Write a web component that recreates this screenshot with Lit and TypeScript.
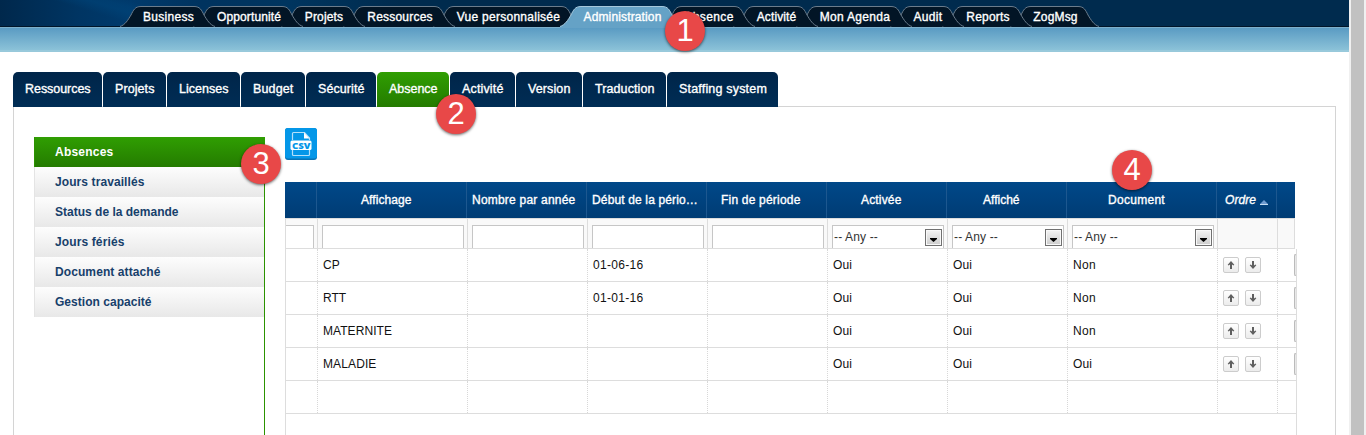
import { LitElement, html, css } from "lit";
import { customElement, property } from "lit/decorators.js";
import { classMap } from "lit/directives/class-map.js";
import { styleMap } from "lit/directives/style-map.js";

/** Label whose tracking is adjusted so that it takes a set width. */
@customElement("fit-text")
class FitText extends LitElement {
  @property() text = "";
  @property({ type: Number }) w = 0;

  static styles = css`
    :host { display: inline-block; white-space: pre; }
    .label { display: inline-block; font-variant-ligatures: none; }
  `;

  updated() {
    const el = this.renderRoot.querySelector(".label") as HTMLElement;
    el.style.letterSpacing = "0px";
    const natural = el.getBoundingClientRect().width;
    if (this.w) el.style.letterSpacing = (this.w - natural) / this.text.length + "px";
  }

  render() {
    return html`<span class="label">${this.text}</span>`;
  }
}

type Item = [label: string, box: number, text: number];

const NAV: Item[] = [
  ["Business", 73, 51], ["Opportunité", 88, 64], ["Projets", 62, 38.5], ["Ressources", 90, 65.5],
  ["Vue personnalisée", 127, 103.5], ["Administration", 101, 78], ["Absence", 72, 49.5],
  ["Activité", 63, 39.5], ["Mon Agenda", 94, 70.5], ["Audit", 52, 29], ["Reports", 68, 43.5], ["ZogMsg", 67, 44.5],
];
const TABS: Item[] = [
  ["Ressources", 89, 65.5], ["Projets", 63, 39.5], ["Licenses", 73, 49.5], ["Budget", 64, 40.5], ["Sécurité", 70, 46.5],
  ["Absence", 72, 48.5], ["Activité", 65, 41.5], ["Version", 66, 42.5], ["Traduction", 83, 59.5], ["Staffing system", 111, 88],
];
const SIDE: [string, number][] = [
  ["Absences", 58.5], ["Jours travaillés", 89.5], ["Status de la demande", 123.5],
  ["Jours fériés", 69.5], ["Document attaché", 105.5], ["Gestion capacité", 96.5],
];
const HEADS: [string, number, number][] = [
  ["", 0, 0], ["Affichage", 50.5, 44], ["Nombre par année", 103.5, 5], ["Début de la pério…", 106, 5],
  ["Fin de période", 79.5, 14], ["Activée", 40.5, 34], ["Affiché", 36.5, 36], ["Document", 57, 41], ["Ordre", 31, 8], ["", 0, 0],
];
const FILTERS = ["text", "text", "text", "text", "text", "select", "select", "select", "", ""];
const ROWS = [
  ["", "CP", "", "01-06-16", "", "Oui", "Oui", "Non"],
  ["", "RTT", "", "01-01-16", "", "Oui", "Oui", "Non"],
  ["", "MATERNITE", "", "", "", "Oui", "Oui", "Non"],
  ["", "MALADIE", "", "", "", "Oui", "Oui", "Oui"],
  ["", "", "", "", "", "", "", ""],
];
const TEXT_W: Record<string, number> = { CP: 17, RTT: 23, MATERNITE: 69, MALADIE: 53.5, "01-06-16": 50.5, "01-01-16": 50.5, Oui: 19, Non: 23 };

const arrow = (down: boolean) => html`<span class="move"><svg width="8" height="8" viewBox="0 0 8 8">
  <path transform=${down ? "rotate(180 4 4)" : ""} d="M4 0 7.300 3.700 6.400 4.400 5 3.400V8H3V3.400L1.600 4.400 .7 3.700Z" fill="#5f5f5f"/></svg></span>`;

@customElement("app-root")
class AppRoot extends LitElement {
  static styles = css`
    :host { display: flex; position: relative; height: 435px; overflow: hidden; background: #fff;
      font-family: "Liberation Sans", Arial, sans-serif; font-size: 12px; color: #111; }
    .page { width: 1349px; flex: none; display: flex; flex-direction: column; }
    .scroll { flex: 1; background: #f0f0f0; padding: 0 2px; }
    .thumb { height: 100%; background: #c1c1c1; }
    .top { height: 26px; flex: none; display: flex; padding-left: 131px; border-bottom: 1px solid #001529;
      background: linear-gradient(197deg, transparent 36%, #00498055 44%, #00457a88 50%, transparent 62%) 30px 0 / 200px 26px no-repeat,
        linear-gradient(90deg, #00284c, #003563 80px, #003a6c 130px, #00335f 200px, #00355f 290px, #002b4e 400px); }
    .nav { position: relative; height: 27px; margin-bottom: -1px; flex: none; display: flex; justify-content: center; padding: 10px 0 0 2px;
      box-sizing: border-box; color: #fff; font-size: 12px; line-height: 15px; }
    .shape { position: absolute; left: -11px; top: 6px; }
    .nav fit-text, .tab fit-text, .head fit-text { -webkit-text-stroke: .35px currentColor; }
    .nav fit-text { position: relative; }
    .band { height: 25px; flex: none; box-sizing: border-box; border-top: 1px solid #7db0cb; border-bottom: 2px solid #98c9db;
      background: linear-gradient(#5a9bc3, #8bc2d8); }
    .tabs { display: flex; gap: 1px; padding: 20px 0 0 13px; flex: none; }
    .tab { position: relative; height: 35px; box-sizing: border-box; padding: 9px 0 0 12px; border-radius: 5px 5px 0 0; color: #fff; font-size: 12.5px; line-height: 16px;
      background: linear-gradient(#002549, #002d55); }
    .tab.on { background: linear-gradient(#309e02, #247b00); }
    .panel { display: flex; flex: 1; box-sizing: border-box; width: 1323px; margin: -1px 0 0 13px; border: 1px solid #d4d4d4; border-bottom: 0; }
    .side { width: 231px; flex: none; box-sizing: border-box; margin: 30px 0 0 20px; border-right: 1px solid #2c9300; }
    .entry { height: 30px; box-sizing: border-box; padding: 1px 0 0 20px; border-left: 1px solid #e4e4e4; font-weight: bold; color: #17406b; line-height: 29px;
      background: linear-gradient(#fdfdfd, #e8e8e8); }
    .entry.on { color: #fff; border-color: #2c9300; background: linear-gradient(#309e02, #247b00); margin-right: -1px; }
    .main { margin: 21px 0 0 20px; width: 1012px; display: flex; flex-direction: column; }
    .csv { display: block; flex: none; margin-bottom: 22px; }
    .grid { display: grid; grid-template-columns: 32px 150px 120px 120px 120px 120px 120px 150px 60px 18px; }
    .head { height: 36px; width: 1010px; background: linear-gradient(#004889, #003c74); color: #fff; }
    .th { display: flex; align-items: center; border-right: 1px solid #1d578f; gap: 4px; padding-bottom: 1px; box-sizing: border-box; }
    .th.last { border: 0; }
    .ordre { font-style: italic; }
    .sort { margin-top: 5px; }
    .filter { height: 31px; box-sizing: border-box; width: 1010px; border: 1px solid #ddd; background: #f9f9f9; }
    .fc { border-right: 1px solid #ddd; box-sizing: border-box; padding: 6px 3px 0 4px; }
    .fc.last { border: 0; }
    .fc.first { padding-left: 0; }
    .field { height: 23px; box-sizing: border-box; background: #fff; border: 1px solid #c6c6c6; border-bottom: 0;
      display: flex; justify-content: space-between; padding: 3px 1px 0 1px; line-height: 17px; color: #333; }
    .first .field { border-left: 0; }
    .drop { width: 17px; height: 17px; box-sizing: border-box; border: 1px solid #707070; background: linear-gradient(#f4f4f4, #ccc); box-shadow: inset 0 0 0 1px #f8f8f8; flex: none; }
    .drop svg { display: block; }
    .body { flex: 1; border: 1px solid #ddd; border-width: 0 1px; box-sizing: border-box; width: 1012px; }
    .row { height: 33px; box-sizing: border-box; border-bottom: 1px solid #ddd; }
    .td { border-right: 1px dotted #d8d8d8; box-sizing: border-box; padding-left: 5px; line-height: 32px; overflow: hidden; }
    .td.moves { display: flex; gap: 6px; padding: 8px 0 0 5px; }
    .move { width: 16px; height: 16px; box-sizing: border-box; border: 1px solid #ccc; border-radius: 2px; background: linear-gradient(#fff, #ececec);
      display: flex; align-items: center; justify-content: center; }
    .td.edge { border: 0; display: flex; justify-content: flex-end; padding: 5px 0 0; }
    .stub { width: 2px; height: 22px; box-sizing: border-box; border: 1px solid #bbb; border-right: 0; border-radius: 2px 0 0 2px; background: #e8e8e8; }
    .badge { position: absolute; width: 40px; height: 40px; border-radius: 50%; background: #e84848; color: #fff; text-align: center;
      font-size: 31px; line-height: 40px; box-shadow: 0 1px 3px #0009; z-index: 20; }
    .b1 { left: 665px; top: 11px; } .b2 { left: 436px; top: 94px; }
    .b3 { left: 241px; top: 144px; } .b4 { left: 1112px; top: 150px; }
  `;

  navTab([label, w, t]: Item, i: number) {
    const on = label === "Administration";
    const r = w + 22;
    const d = `M0 20.5C5 19 8 14 11 9C13.5 4 15 .5 21 .5H${r - 21}C${r - 15} .5 ${r - 13.5} 4 ${r - 11} 9C${r - 8} 14 ${r - 5} 19 ${r} 20.5`;
    return html`<div class="nav" style=${styleMap({ width: w + "px", zIndex: String(on ? 15 : 12 - i) })}>
      <svg class="shape" width=${r} height="22">
        <path d=${d + (on ? `V22H0Z` : "Z")} fill=${on ? "#65a2c6" : "#021526"}/>
        <path d=${d} fill="none" stroke=${on ? "#a5c8dc" : "#6b7c8c"}/>
      </svg><fit-text .text=${label} .w=${t}></fit-text></div>`;
  }

  render() {
    return html`
      <div class="page">
        <div class="top">${NAV.map((n, i) => this.navTab(n, i))}</div>
        <div class="band"></div>
        <div class="tabs">${TABS.map(([l, w, t]) => html`<div class=${classMap({ tab: true, on: l === "Absence" })}
          style=${styleMap({ width: w + "px" })}><fit-text .text=${l} .w=${t}></fit-text></div>`)}</div>
        <div class="panel">
          <div class="side">${SIDE.map(([l, t], i) => html`<div class=${classMap({ entry: true, on: i === 0 })}><fit-text .text=${l} .w=${t}></fit-text></div>`)}</div>
          <div class="main">
            <svg class="csv" width="32" height="32" viewBox="0 0 32 32">
              <rect width="32" height="32" rx="3" fill="#0873b5"/><rect width="32" height="30.5" rx="3" fill="#0497e8"/>
              <path d="M7.5 12V5.5Q7.5 4.5 8.5 4.5H19.5L24.5 10V12M7.5 22V26.5Q7.5 27.5 8.5 27.5H23.5Q24.5 27.5 24.5 26.5V22" fill="none" stroke="#b4e0fa" stroke-width="1.2"/>
              <path d="M19 4.500 24.500 10.500H19Z" fill="#fff"/><rect x="5.500" y="12.500" width="21" height="9.500" rx="1.500" fill="#fff"/>
              <text x="7" y="20.700" font-family="Open Sans, sans-serif" font-weight="800" font-size="9.500" textLength="18.500" lengthAdjust="spacingAndGlyphs" fill="#0497e8">CSV</text>
            </svg>
            <div class="grid head">${HEADS.map(([l, t, pad], i) => html`<div class=${classMap({ th: true, last: i === 9, ordre: i === 8 })} style=${styleMap({ paddingLeft: pad + "px" })}>
              ${l ? html`<fit-text .text=${l} .w=${t}></fit-text>` : ""}
              ${i === 8 ? html`<svg class="sort" width="8" height="5"><path d="M0 4 4 0 8 4Z" fill="#6f9bd0"/><path d="M0 4.500H8" stroke="#c5dcf2"/></svg>` : ""}</div>`)}</div>
            <div class="grid filter">${FILTERS.map((f, i) => html`<div class=${classMap({ fc: true, first: i === 0, last: i === 9 })}>
              ${f ? html`<div class="field">${f === "select" ? html`<fit-text .text=${"-- Any --"} .w=${44}></fit-text>
                <span class="drop"><svg width="15" height="15"><path d="M4 8H11V9L7.500 12 4 9Z" fill="#000"/></svg></span>` : ""}</div>` : ""}</div>`)}</div>
            <div class="body">${ROWS.map((row, r) => html`<div class="grid row">
              ${row.map((c) => html`<div class="td">${c ? html`<fit-text .text=${c} .w=${TEXT_W[c]}></fit-text>` : ""}</div>`)}
              <div class="td moves">${r < 4 ? html`${arrow(false)}${arrow(true)}` : ""}</div>
              <div class="td edge">${r < 4 ? html`<span class="stub"></span>` : ""}</div>
            </div>`)}</div>
          </div>
        </div>
      </div>
      <div class="scroll"><div class="thumb"></div></div>
      ${[1, 2, 3, 4].map((n) => html`<div class="badge b${n}">${n}</div>`)}
    `;
  }
}
